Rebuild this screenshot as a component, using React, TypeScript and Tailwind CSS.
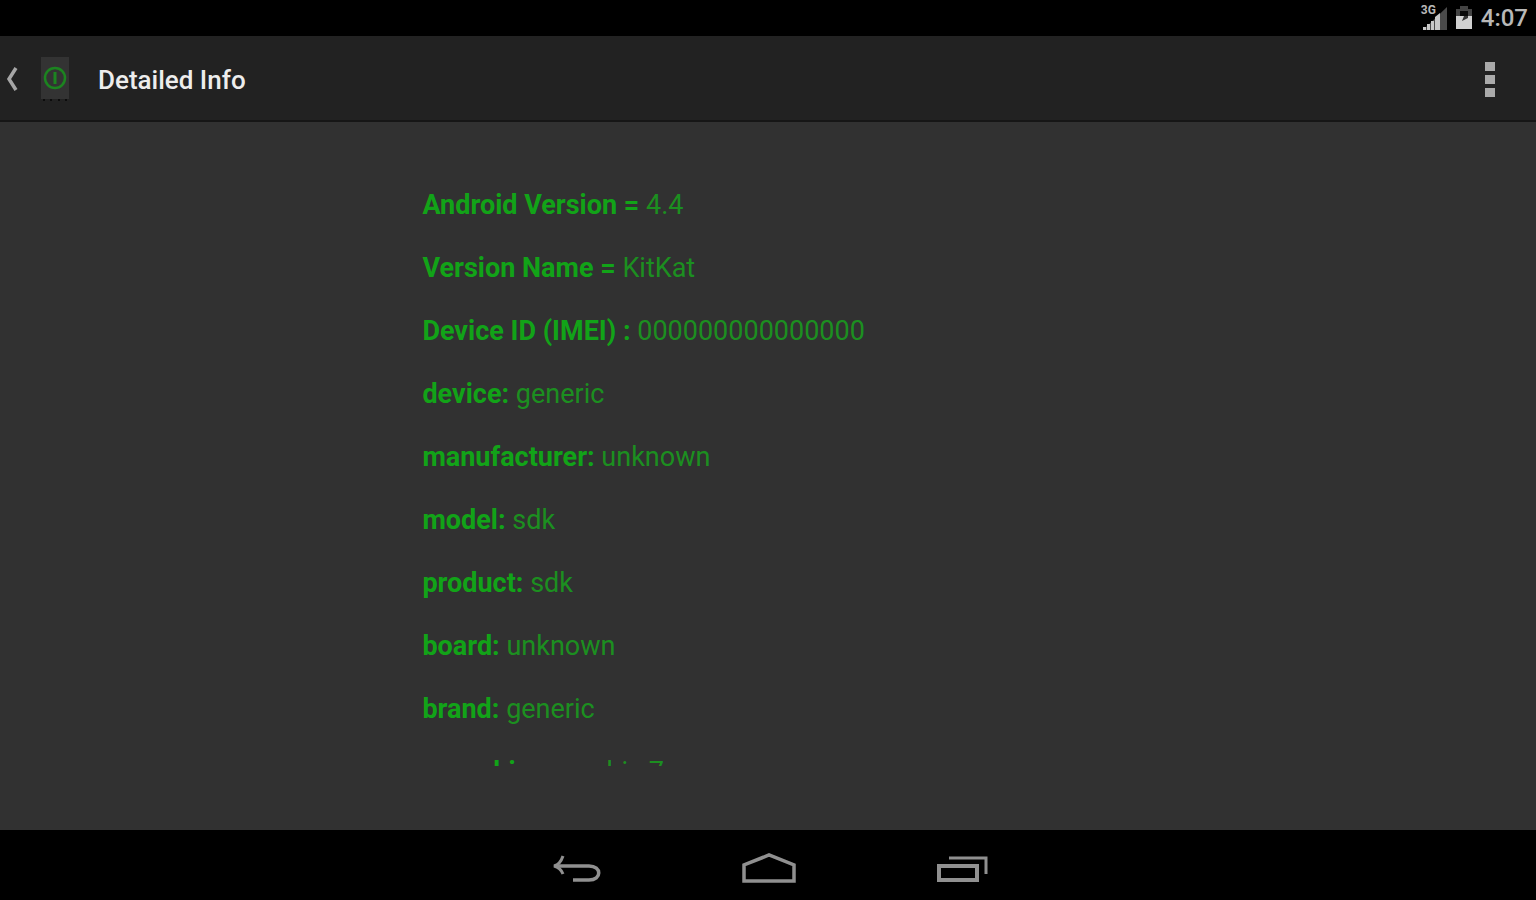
type InfoRow = { label: string; value: string };

const rows: InfoRow[] = [
  { label: "Android Version =", value: "4.4" },
  { label: "Version Name =", value: "KitKat" },
  { label: "Device ID (IMEI) :", value: "000000000000000" },
  { label: "device:", value: "generic" },
  { label: "manufacturer:", value: "unknown" },
  { label: "model:", value: "sdk" },
  { label: "product:", value: "sdk" },
  { label: "board:", value: "unknown" },
  { label: "brand:", value: "generic" },
  { label: "cpu_abi:", value: "armeabi-v7a" },
];

function StatusBar() {
  return (
    <div className="flex h-9 shrink-0 items-center justify-end gap-2 bg-black pr-2 text-[#b8b8b8]">
      <div className="relative h-7 w-7">
        <svg viewBox="0 0 28 28" className="h-7 w-7" aria-hidden="true">
          <path d="M4 26 28 3v23z" fill="#4a4a4a" />
          <path d="M4 26v-3h3v3zM8 26v-6h3v6zM12 26v-9h3v9zM16 26V13l5-4v17z" fill="#c8c8c8" />
        </svg>
        <span className="absolute left-0 top-0 pl-0.5 text-[12px] font-bold leading-3">3G</span>
      </div>
      <svg viewBox="0 0 18 26" className="h-[26px] w-[18px]" role="img" aria-label="Battery charging">
        <path d="M5 1h8v3h4v7H1V4h4z" fill="#444444" />
        <path d="M5 6h8v5H5z" fill="#080808" />
        <path d="M1 11h16v13H1z" fill="#d0d0d0" />
        <path d="M13 11v2l-6 3 2-5z" fill="#333333" />
      </svg>
      <time className="text-[24px] font-medium leading-8">4:07</time>
    </div>
  );
}

function AppBar() {
  return (
    <header className="flex h-[86px] shrink-0 items-center border-b-2 border-[#161616] bg-[#222222] pl-1 pr-8 pt-1">
      <button type="button" aria-label="Navigate up" className="flex items-center gap-5">
        <svg viewBox="0 0 16 28" className="h-7 w-4" aria-hidden="true">
          <path d="M12 2 5 13l7 11" fill="none" stroke="#a6a6a6" strokeWidth="3.5" />
        </svg>
        <svg viewBox="0 0 30 46" className="h-[46px] w-[30px]" aria-hidden="true">
          <path d="M1 0h28v42H1z" fill="#333333" />
          <path d="M3 43h2M10 43h2M18 43h2M25 43h2" stroke="#0c0c0c" strokeWidth="2" />
          <circle cx="15" cy="21" r="10" fill="none" stroke="#1c8420" strokeWidth="2.5" />
          <path d="M15 15v12" stroke="#1c8420" strokeWidth="3" />
        </svg>
      </button>
      <h1 className="ml-7 text-[26px] font-medium leading-8 text-[#ededed]">Detailed Info</h1>
      <button type="button" aria-label="More options" className="ml-auto flex h-12 w-7 items-center justify-center">
        <svg viewBox="0 0 10 36" className="h-9 w-[10px]" aria-hidden="true">
          <path d="M0 0h10v9H0zM0 13h10v9H0zM0 26h10v9H0z" fill="#aaaaaa" />
        </svg>
      </button>
    </header>
  );
}

function NavBar() {
  return (
    <nav className="flex h-[70px] shrink-0 items-center justify-center gap-[138px] bg-black pl-0.5 pt-2">
      <button type="button" aria-label="Back">
        <svg viewBox="0 0 54 32" className="h-8 w-[54px]" fill="none" stroke="#909090" aria-hidden="true">
          <path d="M6 13h34c13 0 13 14 0 14H24" strokeWidth="3.5" />
          <path d="M14 3c-2 6-5 9-9 10 4 1 7 3 9 8" strokeWidth="3" />
        </svg>
      </button>
      <button type="button" aria-label="Home">
        <svg viewBox="0 0 56 32" className="h-8 w-14" fill="none" stroke="#909090" aria-hidden="true">
          <path d="M3 28V12L28 2l25 10v16z" strokeWidth="3.5" />
        </svg>
      </button>
      <button type="button" aria-label="Recent apps">
        <svg viewBox="0 0 54 32" className="h-8 w-[54px]" fill="none" stroke="#909090" aria-hidden="true">
          <path d="M4 13h38v14H4z" strokeWidth="4" />
          <path d="M14 5h37v16" strokeWidth="3" />
        </svg>
      </button>
    </nav>
  );
}

export default function App() {
  return (
    <div className="flex h-screen flex-col overflow-hidden bg-[#313131] font-[Roboto,sans-serif]">
      <StatusBar />
      <AppBar />
      <main className="flex min-h-0 flex-1 flex-col pb-16 pl-[27.5%] pt-[67px]">
        <ul className="flex min-h-0 flex-1 flex-col gap-[31px] overflow-hidden text-[27px] leading-8 text-[#1c8f20]">
          {rows.map((row) => (
            <li key={row.label} className="shrink-0">
              <strong className="font-bold text-[#12a318]">{row.label}</strong> {row.value}
            </li>
          ))}
        </ul>
      </main>
      <NavBar />
    </div>
  );
}
